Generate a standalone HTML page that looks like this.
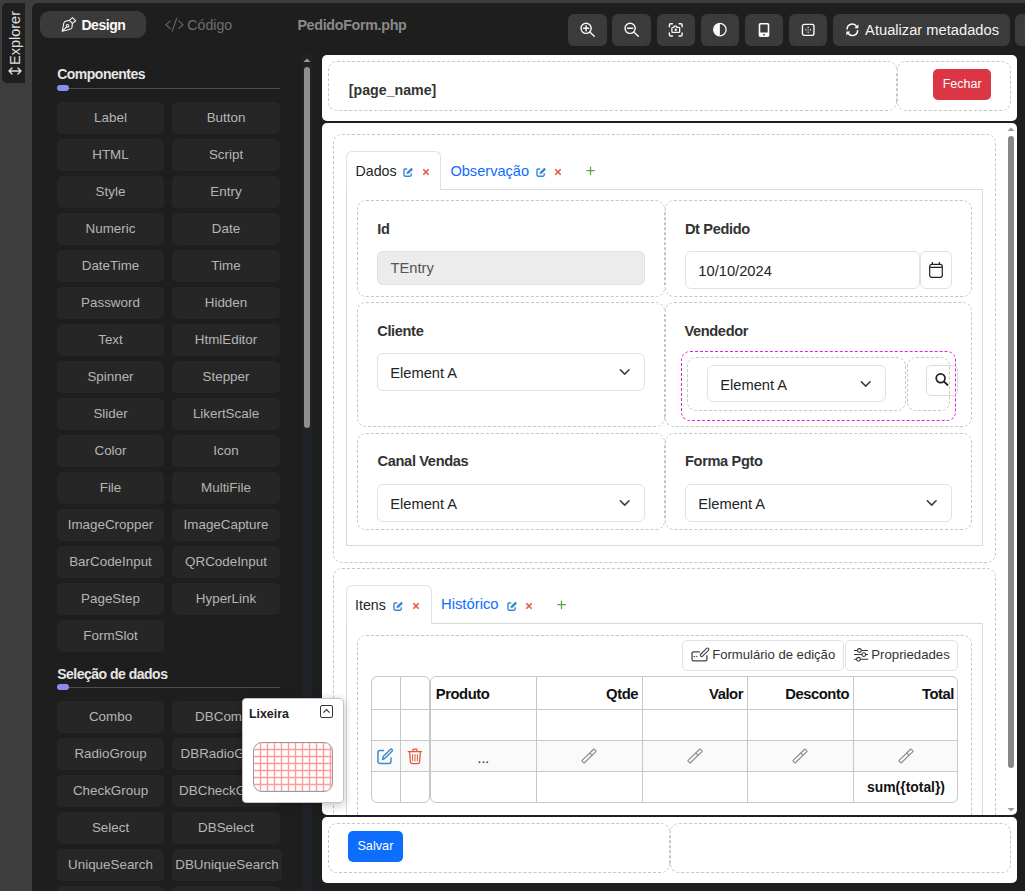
<!DOCTYPE html>
<html><head><meta charset="utf-8"><title>PedidoForm</title><style>
*{box-sizing:border-box;margin:0;padding:0}
html,body{width:1025px;height:891px;overflow:hidden;background:#3d3d3d;font-family:"Liberation Sans",sans-serif;position:relative}
.a{position:absolute}
.t{position:absolute;white-space:nowrap;line-height:1}
.dash{position:absolute;border:1px dashed #c6c6c6;border-radius:9px}
.card{position:absolute;background:#fff;border-radius:5px}
.tb{position:absolute;top:14px;height:32px;background:#3b3b3b;border-radius:6px}
.sb{position:absolute;height:32px;background:#262626;border-radius:5px;color:#b5b5b5;font-size:13.4px;text-align:center;white-space:nowrap;line-height:1;padding-top:9.8px}
.sh{position:absolute;left:57px;color:#e6e6e6;font-weight:bold;font-size:13.4px;white-space:nowrap;line-height:1}
.sl{position:absolute;left:57px;width:223px;height:1px;background:#505050}
.si{position:absolute;left:57px;width:12px;height:6px;border-radius:3px;background:#8c8cf5}
.lbl{position:absolute;font-weight:bold;font-size:14px;color:#333;white-space:nowrap;line-height:1}
.inp{position:absolute;border:1px solid #dee2e6;border-radius:6px;background:#fff;font-size:14.6px;color:#212529;white-space:nowrap}
.inp span{position:absolute;left:12px;top:50%;transform:translateY(-50%);line-height:1}
</style></head><body>
<div class="a" style="left:2px;top:3px;width:23px;height:80px;background:#1f1f1f;border-radius:5px 0 0 5px"></div>
<div class="t" style="left:14.8px;top:37.6px;transform:translate(-50%,-50%) rotate(-90deg);color:#e0e0e0;font-size:14.5px">Explorer</div>
<svg class="a" style="left:7px;top:66px" width="16" height="10" viewBox="0 0 16 10"><path d="M2 5H14M5 2L2 5L5 8M11 2L14 5L11 8" stroke="#ddd" stroke-width="1.4" fill="none" stroke-linecap="round" stroke-linejoin="round"/></svg>
<div class="a" style="left:32px;top:3px;width:1000px;height:900px;background:#1e1e1e;border-radius:6px 0 0 0"></div>
<div class="a" style="left:40px;top:11px;width:106px;height:27px;background:#3a3a3a;border-radius:9px"></div>
<svg class="a" style="left:56px;top:14px" width="24" height="22" viewBox="0 0 24 22"><g fill="none" stroke="#f2f2f2" stroke-width="1.1" stroke-linejoin="round"><path d="M16.5 3.7L19.75 6.8L16.4 9.4L13.4 6.4Z"/><path d="M13.4 6.4Q10 7 8.6 7.7Q7.6 8.4 7.2 12.3L6.2 17.3L8.1 16.8Q12 16 13.8 15.3Q15.8 14.5 16 13.5L16.4 9.4"/><circle cx="11.5" cy="11.8" r="1.3"/><path d="M10.6 12.8L6.4 17"/></g></svg>
<div class="t" style="left:81.40px;top:18.10px;font-size:14px;color:#fafafa;font-weight:bold;letter-spacing:-0.45px;">Design</div>
<svg class="a" style="left:165px;top:17px" width="19" height="16" viewBox="0 0 19 16"><path d="M5.5 3.6L1 7.7L5.5 11.8M13.4 3.6L18 7.7L13.4 11.8M11.8 0.9L7.1 14.5" stroke="#6a6a6a" stroke-width="1.05" fill="none"/></svg>
<div class="t" style="left:187.30px;top:17.93px;font-size:14.2px;color:#6e6e6e;">Código</div>
<div class="t" style="left:297.40px;top:18.04px;font-size:14.3px;color:#8a8a8a;font-weight:bold;letter-spacing:-0.32px;">PedidoForm.php</div>
<div class="tb" style="left:568px;width:39px"></div>
<div class="tb" style="left:612px;width:39px"></div>
<div class="tb" style="left:657px;width:38px"></div>
<div class="tb" style="left:701px;width:38px"></div>
<div class="tb" style="left:745px;width:38px"></div>
<div class="tb" style="left:789px;width:38px"></div>
<div class="tb" style="left:833px;width:177px"></div>
<div class="tb" style="left:1015px;width:40px"></div>
<svg class="a" style="left:579px;top:20px" width="18" height="18" viewBox="0 0 18 18"><g fill="none" stroke="#fafafa" stroke-width="1.4" stroke-linecap="round"><circle cx="7.1" cy="8.3" r="5.1"/><path d="M10.8 12L15.3 16.3M7.1 5.7V10.9M4.5 8.3H9.7"/></g></svg>
<svg class="a" style="left:623px;top:20px" width="18" height="18" viewBox="0 0 18 18"><g fill="none" stroke="#fafafa" stroke-width="1.4" stroke-linecap="round"><circle cx="7.1" cy="8.3" r="5.1"/><path d="M10.8 12L15.3 16.3M4.5 8.3H9.7"/></g></svg>
<svg class="a" style="left:667px;top:22px" width="18" height="16" viewBox="0 0 18 16"><g fill="none" stroke="#fafafa" stroke-width="1.4" stroke-linecap="round"><path d="M2.4 4.8V3Q2.4 1.7 3.7 1.7H5.4M12.1 1.7H13.8Q15.1 1.7 15.1 3V4.8M15.1 10.9V12.7Q15.1 14 13.8 14H12.1M5.4 14H3.7Q2.4 14 2.4 12.7V10.9"/></g><path d="M4.9 6.3Q4.9 5.4 5.8 5.4H6.7L7.3 4.2H9.3L9.9 5.4H11.8Q12.7 5.4 12.7 6.3V9.5Q12.7 10.4 11.8 10.4H5.8Q4.9 10.4 4.9 9.5Z" fill="none" stroke="#fafafa" stroke-width="1.3" stroke-linejoin="round"/><circle cx="8.8" cy="7.8" r="1.2" fill="#fafafa"/></svg>
<svg class="a" style="left:712px;top:22px" width="16" height="16" viewBox="0 0 16 16"><circle cx="7.9" cy="7.65" r="6.2" fill="none" stroke="#fafafa" stroke-width="1.3"/><path d="M7.9 1.45A6.2 6.2 0 0 0 7.9 13.85Z" fill="#fafafa"/></svg>
<svg class="a" style="left:758px;top:22px" width="12" height="16" viewBox="0 0 12 16"><rect x="0.7" y="0.9" width="10.6" height="14.1" rx="1.8" fill="#fafafa"/><rect x="2.3" y="2.6" width="7.4" height="8" rx=".3" fill="#3b3b3b"/><rect x="5.1" y="12.1" width="1.8" height="1.3" rx=".5" fill="#3b3b3b"/></svg>
<svg class="a" style="left:801px;top:23px" width="15" height="15" viewBox="0 0 15 15"><rect x="1.45" y="1.35" width="11.5" height="11" rx="1.8" fill="none" stroke="#fafafa" stroke-width="1.4"/><g fill="#fafafa"><path d="M7.2 3.7L8.3 4.9H6.1Z"/><path d="M7.2 10L8.3 8.8H6.1Z"/><path d="M4.2 6.85L5.4 5.8V7.9Z"/><path d="M10.2 6.85L9 5.8V7.9Z"/><rect x="6.7" y="6.35" width="1" height="1"/></g></svg>
<svg class="a" style="left:845px;top:23px" width="15" height="14" viewBox="0 0 15 14"><g fill="none" stroke="#fafafa" stroke-width="1.5" stroke-linecap="round"><path d="M2.1 6A5.1 5.1 0 0 1 11.6 3.6"/><path d="M12.6 7.6A5.1 5.1 0 0 1 3.1 10"/></g><path d="M13.4 1.2V5.2H9.4Z" fill="#fafafa"/><path d="M1.3 12.6V8.6H5.3Z" fill="#fafafa"/></svg>
<div class="t" style="left:865.10px;top:22.91px;font-size:14.7px;color:#f4f4f4;">Atualizar metadados</div>
<div class="t" style="left:57.20px;top:67.10px;font-size:14px;color:#e6e6e6;font-weight:bold;letter-spacing:-0.5px;">Componentes</div>
<div class="sl" style="top:88px"></div><div class="si" style="top:85px"></div>
<div class="sb" style="left:57px;top:101.6px;width:107px">Label</div>
<div class="sb" style="left:172px;top:101.6px;width:108px">Button</div>
<div class="sb" style="left:57px;top:138.6px;width:107px">HTML</div>
<div class="sb" style="left:172px;top:138.6px;width:108px">Script</div>
<div class="sb" style="left:57px;top:175.6px;width:107px">Style</div>
<div class="sb" style="left:172px;top:175.6px;width:108px">Entry</div>
<div class="sb" style="left:57px;top:212.6px;width:107px">Numeric</div>
<div class="sb" style="left:172px;top:212.6px;width:108px">Date</div>
<div class="sb" style="left:57px;top:249.6px;width:107px">DateTime</div>
<div class="sb" style="left:172px;top:249.6px;width:108px">Time</div>
<div class="sb" style="left:57px;top:286.6px;width:107px">Password</div>
<div class="sb" style="left:172px;top:286.6px;width:108px">Hidden</div>
<div class="sb" style="left:57px;top:323.6px;width:107px">Text</div>
<div class="sb" style="left:172px;top:323.6px;width:108px">HtmlEditor</div>
<div class="sb" style="left:57px;top:360.6px;width:107px">Spinner</div>
<div class="sb" style="left:172px;top:360.6px;width:108px">Stepper</div>
<div class="sb" style="left:57px;top:397.6px;width:107px">Slider</div>
<div class="sb" style="left:172px;top:397.6px;width:108px">LikertScale</div>
<div class="sb" style="left:57px;top:434.6px;width:107px">Color</div>
<div class="sb" style="left:172px;top:434.6px;width:108px">Icon</div>
<div class="sb" style="left:57px;top:471.6px;width:107px">File</div>
<div class="sb" style="left:172px;top:471.6px;width:108px">MultiFile</div>
<div class="sb" style="left:57px;top:508.6px;width:107px">ImageCropper</div>
<div class="sb" style="left:172px;top:508.6px;width:108px">ImageCapture</div>
<div class="sb" style="left:57px;top:545.6px;width:107px">BarCodeInput</div>
<div class="sb" style="left:172px;top:545.6px;width:108px">QRCodeInput</div>
<div class="sb" style="left:57px;top:582.6px;width:107px">PageStep</div>
<div class="sb" style="left:172px;top:582.6px;width:108px">HyperLink</div>
<div class="sb" style="left:57px;top:619.6px;width:107px">FormSlot</div>
<div class="t" style="left:57.20px;top:666.60px;font-size:14px;color:#e6e6e6;font-weight:bold;letter-spacing:-0.5px;">Seleção de dados</div>
<div class="sl" style="top:687px"></div><div class="si" style="top:684px"></div>
<div class="sb" style="left:57px;top:700.6px;width:107px">Combo</div>
<div class="sb" style="left:172px;top:700.6px;width:108px">DBCombo</div>
<div class="sb" style="left:57px;top:737.6px;width:107px">RadioGroup</div>
<div class="sb" style="left:172px;top:737.6px;width:108px">DBRadioGroup</div>
<div class="sb" style="left:57px;top:774.6px;width:107px">CheckGroup</div>
<div class="sb" style="left:172px;top:774.6px;width:108px">DBCheckGroup</div>
<div class="sb" style="left:57px;top:811.6px;width:107px">Select</div>
<div class="sb" style="left:172px;top:811.6px;width:108px">DBSelect</div>
<div class="sb" style="left:57px;top:848.6px;width:107px">UniqueSearch</div>
<div class="sb" style="left:172px;top:848.6px;width:110px">DBUniqueSearch</div>
<div class="sb" style="left:57px;top:885.6px;width:107px">MultiSearch</div>
<div class="sb" style="left:172px;top:885.6px;width:108px">DBMultiSearch</div>
<div class="a" style="left:302px;top:55px;width:10px;height:840px;background:#1f2328"></div>
<svg class="a" style="left:302px;top:57px" width="10" height="6" viewBox="0 0 10 6"><path d="M1.5 5L5 1.5L8.5 5Z" fill="#9a9a9a"/></svg>
<div class="a" style="left:304px;top:67px;width:6px;height:361px;background:#8f8f8f;border-radius:3px"></div>
<div class="card" style="left:322px;top:55px;width:695px;height:66px"></div>
<div class="dash" style="left:328px;top:61px;width:569px;height:50px"></div>
<div class="dash" style="left:897px;top:61px;width:114px;height:50px"></div>
<div class="a" style="left:896px;top:71px;width:1px;height:30px;overflow:hidden;background:#fff"><div class="dash" style="left:0;top:-10px;width:114px;height:50px"></div></div>
<div class="t" style="left:348.80px;top:82.63px;font-size:14.2px;color:#333;font-weight:bold;">[page_name]</div>
<div class="a" style="left:933px;top:69px;width:58px;height:31px;background:#dc3545;border-radius:5px"></div>
<div class="t" style="left:942.70px;top:78.28px;font-size:12.5px;color:#fff;">Fechar</div>
<div class="card" style="left:322px;top:123px;width:695px;height:692px;overflow:hidden">
<div class="dash" style="left:11px;top:11px;width:663px;height:429px;"></div>
<div class="a" style="left:24px;top:66px;width:637px;height:357px;border:1px solid #dadada;border-top:none"></div>
<div class="a" style="left:118px;top:66px;width:543px;height:1px;background:#dadada"></div>
<div class="a" style="left:24px;top:28px;width:95px;height:39px;border:1px solid #dee2e6;border-bottom:none;border-radius:6px 6px 0 0;background:#fff"></div>
<div class="t" style="left:33.60px;top:40.93px;font-size:14.2px;color:#212529;">Dados</div>
<svg class="a" style="left:81px;top:44.099999999999994px;" width="12" height="11" viewBox="0 0 12 11"><path d="M4.2 2H2.1Q1 2 1 3.1V8.1Q1 9.2 2.1 9.2H7.1Q8.2 9.2 8.2 8.1V6.2" fill="none" stroke="#3a87cf" stroke-width="1.4"/><path d="M3.5 7L3.9 5.1L8.3 0.7L10 2.4L5.6 6.8Z" fill="#3a87cf"/></svg>
<svg class="a" style="left:99.5px;top:45px;" width="8" height="8" viewBox="0 0 8 8"><path d="M1.3 1.3L6.7 6.7M6.7 1.3L1.3 6.7" stroke="#e0533c" stroke-width="1.5"/></svg>
<div class="t" style="left:128.40px;top:40.59px;font-size:14.6px;color:#0d6efd;">Observação</div>
<svg class="a" style="left:214px;top:44.099999999999994px;" width="12" height="11" viewBox="0 0 12 11"><path d="M4.2 2H2.1Q1 2 1 3.1V8.1Q1 9.2 2.1 9.2H7.1Q8.2 9.2 8.2 8.1V6.2" fill="none" stroke="#3a87cf" stroke-width="1.4"/><path d="M3.5 7L3.9 5.1L8.3 0.7L10 2.4L5.6 6.8Z" fill="#3a87cf"/></svg>
<svg class="a" style="left:231.5px;top:45px;" width="8" height="8" viewBox="0 0 8 8"><path d="M1.3 1.3L6.7 6.7M6.7 1.3L1.3 6.7" stroke="#e0533c" stroke-width="1.5"/></svg>
<svg class="a" style="left:263.5px;top:43px;" width="9" height="10" viewBox="0 0 9 10"><path d="M4.5 1.2V8.6M0.9 4.7H8.4" stroke="#5aa83c" stroke-width="1.3" stroke-linecap="round"/></svg>
<div class="dash" style="left:35px;top:77px;width:308px;height:97px;"></div>
<div class="dash" style="left:343px;top:77px;width:307px;height:97px;"></div>
<div class="dash" style="left:35px;top:179px;width:308px;height:125px;"></div>
<div class="dash" style="left:343px;top:179px;width:307px;height:125px;"></div>
<div class="dash" style="left:35px;top:310px;width:308px;height:97px;"></div>
<div class="dash" style="left:343px;top:310px;width:307px;height:97px;"></div>
<div class="a" style="left:342px;top:87px;width:1px;height:77px;overflow:hidden;background:#fff"><div class="dash" style="left:0;top:-10px;width:307px;height:97px"></div></div>
<div class="a" style="left:342px;top:189px;width:1px;height:105px;overflow:hidden;background:#fff"><div class="dash" style="left:0;top:-10px;width:307px;height:125px"></div></div>
<div class="a" style="left:342px;top:320px;width:1px;height:77px;overflow:hidden;background:#fff"><div class="dash" style="left:0;top:-10px;width:307px;height:97px"></div></div>
<div class="t" style="left:55.30px;top:98.89px;font-size:14.6px;color:#333;font-weight:bold;letter-spacing:-0.35px;">Id</div>
<div class="inp" style="left:55px;top:128px;width:268px;height:34px;background:#ececec;border-color:#dfe1e4"></div>
<div class="t" style="left:68.50px;top:138.40px;font-size:14.7px;color:#555;">TEntry</div>
<div class="t" style="left:362.90px;top:98.89px;font-size:14.6px;color:#333;font-weight:bold;letter-spacing:-0.35px;">Dt Pedido</div>
<div class="inp" style="left:363px;top:128px;width:235px;height:38px;"></div>
<div class="t" style="left:376.30px;top:140.61px;font-size:14.7px;color:#212529;">10/10/2024</div>
<div class="inp" style="left:598px;top:128px;width:32px;height:38px;"></div>
<svg class="a" style="left:606px;top:138px;" width="16" height="18" viewBox="0 0 16 18"><rect x="1.7" y="3.4" width="12.6" height="12.9" rx="2" fill="none" stroke="#222" stroke-width="1.2"/><path d="M1.7 6.3H14.3M4.4 1.1V4M11.4 1.1V4" stroke="#222" stroke-width="1.2"/></svg>
<div class="t" style="left:55.20px;top:200.69px;font-size:14.6px;color:#333;font-weight:bold;letter-spacing:-0.35px;">Cliente</div>
<div class="inp" style="left:55px;top:230px;width:268px;height:38px;"></div>
<div class="t" style="left:68.20px;top:243.00px;font-size:14.7px;color:#212529;">Element A</div>
<svg class="a" style="left:297px;top:245px;" width="12" height="8" viewBox="0 0 12 8"><path d="M1.3 1.7L5.7 6.1L10.1 1.7" fill="none" stroke="#343a40" stroke-width="1.5" stroke-linecap="round" stroke-linejoin="round"/></svg>
<div class="t" style="left:362.40px;top:200.69px;font-size:14.6px;color:#333;font-weight:bold;letter-spacing:-0.35px;">Vendedor</div>
<div class="a" style="left:359px;top:228px;width:275px;height:70px;border:1px dashed #e020e0;border-radius:9px"></div>
<div class="dash" style="left:365px;top:234px;width:219px;height:54px;"></div>
<div class="dash" style="left:585px;top:234px;width:43px;height:54px;"></div>
<div class="inp" style="left:385px;top:242px;width:179px;height:37px;"></div>
<div class="t" style="left:398.20px;top:255.00px;font-size:14.7px;color:#212529;">Element A</div>
<svg class="a" style="left:538px;top:257px;" width="12" height="8" viewBox="0 0 12 8"><path d="M1.3 1.7L5.7 6.1L10.1 1.7" fill="none" stroke="#343a40" stroke-width="1.5" stroke-linecap="round" stroke-linejoin="round"/></svg>
<div class="a" style="left:604px;top:242px;width:32px;height:31px;border:1px solid #dcdcdc;border-radius:5px"></div>
<div class="a" style="left:604px;top:242px;width:24px;height:31px;overflow:hidden"><svg class="a" style="left:8px;top:7px" width="17" height="16" viewBox="0 0 17 16"><circle cx="6.6" cy="6.2" r="4.4" fill="none" stroke="#222" stroke-width="1.7"/><path d="M9.9 9.5L13.6 13" stroke="#222" stroke-width="1.8" stroke-linecap="round"/></svg></div>
<div class="t" style="left:55.60px;top:330.89px;font-size:14.6px;color:#333;font-weight:bold;letter-spacing:-0.35px;">Canal Vendas</div>
<div class="inp" style="left:55px;top:361px;width:268px;height:38px;"></div>
<div class="t" style="left:68.20px;top:374.00px;font-size:14.7px;color:#212529;">Element A</div>
<svg class="a" style="left:297px;top:376px;" width="12" height="8" viewBox="0 0 12 8"><path d="M1.3 1.7L5.7 6.1L10.1 1.7" fill="none" stroke="#343a40" stroke-width="1.5" stroke-linecap="round" stroke-linejoin="round"/></svg>
<div class="t" style="left:363.00px;top:330.89px;font-size:14.6px;color:#333;font-weight:bold;letter-spacing:-0.35px;">Forma Pgto</div>
<div class="inp" style="left:363px;top:361px;width:267px;height:38px;"></div>
<div class="t" style="left:376.20px;top:374.00px;font-size:14.7px;color:#212529;">Element A</div>
<svg class="a" style="left:604px;top:376px;" width="12" height="8" viewBox="0 0 12 8"><path d="M1.3 1.7L5.7 6.1L10.1 1.7" fill="none" stroke="#343a40" stroke-width="1.5" stroke-linecap="round" stroke-linejoin="round"/></svg>
<div class="dash" style="left:11px;top:445px;width:663px;height:400px;"></div>
<div class="a" style="left:24px;top:500px;width:637px;height:400px;border:1px solid #dadada;border-top:none"></div>
<div class="a" style="left:109px;top:500px;width:552px;height:1px;background:#dadada"></div>
<div class="a" style="left:24px;top:462px;width:86px;height:39px;border:1px solid #dee2e6;border-bottom:none;border-radius:6px 6px 0 0;background:#fff"></div>
<div class="t" style="left:33.00px;top:474.53px;font-size:14.2px;color:#212529;">Itens</div>
<svg class="a" style="left:71px;top:478.1px;" width="12" height="11" viewBox="0 0 12 11"><path d="M4.2 2H2.1Q1 2 1 3.1V8.1Q1 9.2 2.1 9.2H7.1Q8.2 9.2 8.2 8.1V6.2" fill="none" stroke="#3a87cf" stroke-width="1.4"/><path d="M3.5 7L3.9 5.1L8.3 0.7L10 2.4L5.6 6.8Z" fill="#3a87cf"/></svg>
<svg class="a" style="left:89.5px;top:479px;" width="8" height="8" viewBox="0 0 8 8"><path d="M1.3 1.3L6.7 6.7M6.7 1.3L1.3 6.7" stroke="#e0533c" stroke-width="1.5"/></svg>
<div class="t" style="left:119.00px;top:474.02px;font-size:14.8px;color:#0d6efd;">Histórico</div>
<svg class="a" style="left:185px;top:478.1px;" width="12" height="11" viewBox="0 0 12 11"><path d="M4.2 2H2.1Q1 2 1 3.1V8.1Q1 9.2 2.1 9.2H7.1Q8.2 9.2 8.2 8.1V6.2" fill="none" stroke="#3a87cf" stroke-width="1.4"/><path d="M3.5 7L3.9 5.1L8.3 0.7L10 2.4L5.6 6.8Z" fill="#3a87cf"/></svg>
<svg class="a" style="left:203px;top:479px;" width="8" height="8" viewBox="0 0 8 8"><path d="M1.3 1.3L6.7 6.7M6.7 1.3L1.3 6.7" stroke="#e0533c" stroke-width="1.5"/></svg>
<svg class="a" style="left:234.5px;top:477px;" width="9" height="10" viewBox="0 0 9 10"><path d="M4.5 1.2V8.6M0.9 4.7H8.4" stroke="#5aa83c" stroke-width="1.3" stroke-linecap="round"/></svg>
<div class="dash" style="left:35px;top:512px;width:615px;height:400px;"></div>
<div class="a" style="left:360px;top:517px;width:162px;height:31px;border:1px solid #dee2e6;border-radius:5px"></div>
<svg class="a" style="left:368px;top:524px;" width="20" height="17" viewBox="0 0 20 17"><path d="M9.8 4.85H3.6Q2.05 4.85 2.05 6.4V12.3Q2.05 13.85 3.6 13.85H15.4Q16.95 13.85 16.95 12.3V8.3" fill="none" stroke="#444" stroke-width="1.3"/><g transform="translate(14.6 5.3) rotate(-45)"><rect x="-5.4" y="-1.35" width="10.8" height="2.7" rx="1.3" fill="#fff" stroke="#444" stroke-width="1.1"/></g><path d="M3.6 9.5H5.1" stroke="#444" stroke-width="1.1"/><circle cx="6.8" cy="9.5" r=".65" fill="#444"/></svg>
<div class="t" style="left:390.20px;top:525.07px;font-size:13.1px;color:#333;">Formulário de edição</div>
<div class="a" style="left:523px;top:517px;width:113px;height:31px;border:1px solid #dee2e6;border-radius:5px"></div>
<svg class="a" style="left:531px;top:525px;" width="16" height="15" viewBox="0 0 16 15"><g stroke="#333" stroke-width="1.1" fill="#fff"><path d="M1.1 2.5H15M1.1 6.5H15M1.1 11.3H15"/><circle cx="6.4" cy="2.5" r="1.9"/><circle cx="10.8" cy="6.6" r="1.9"/><circle cx="5.5" cy="11.3" r="1.9"/></g></svg>
<div class="t" style="left:549.30px;top:524.98px;font-size:13.2px;color:#333;">Propriedades</div>
<div class="a" style="left:49px;top:553px;width:59px;height:127px;border:1px solid #c8c8c8;border-radius:6px;overflow:hidden"></div>
<div class="a" style="left:108px;top:553px;width:528px;height:127px;border:1px solid #c8c8c8;border-radius:6px;overflow:hidden"></div>
<div class="a" style="left:50px;top:618px;width:57px;height:30px;background:#fafafa"></div>
<div class="a" style="left:109px;top:618px;width:526px;height:30px;background:#fafafa"></div>
<div class="a" style="left:49px;top:586px;width:59px;height:1px;background:#c8c8c8"></div>
<div class="a" style="left:108px;top:586px;width:528px;height:1px;background:#c8c8c8"></div>
<div class="a" style="left:49px;top:617px;width:59px;height:1px;background:#c8c8c8"></div>
<div class="a" style="left:108px;top:617px;width:528px;height:1px;background:#c8c8c8"></div>
<div class="a" style="left:49px;top:648px;width:59px;height:1px;background:#c8c8c8"></div>
<div class="a" style="left:108px;top:648px;width:528px;height:1px;background:#c8c8c8"></div>
<div class="a" style="left:78px;top:553px;width:1px;height:127px;background:#c8c8c8"></div>
<div class="a" style="left:214px;top:553px;width:1px;height:127px;background:#c8c8c8"></div>
<div class="a" style="left:320px;top:553px;width:1px;height:127px;background:#c8c8c8"></div>
<div class="a" style="left:425px;top:553px;width:1px;height:127px;background:#c8c8c8"></div>
<div class="a" style="left:531px;top:553px;width:1px;height:127px;background:#c8c8c8"></div>
<div class="t" style="left:113.80px;top:563.72px;font-size:14.8px;color:#111;font-weight:bold;letter-spacing:-0.45px;">Produto</div>
<div class="t" style="left:210.00px;top:563.72px;font-size:14.8px;color:#111;font-weight:bold;width:106px;text-align:right;letter-spacing:-0.45px;">Qtde</div>
<div class="t" style="left:315.00px;top:563.72px;font-size:14.8px;color:#111;font-weight:bold;width:106px;text-align:right;letter-spacing:-0.45px;">Valor</div>
<div class="t" style="left:421.00px;top:563.72px;font-size:14.8px;color:#111;font-weight:bold;width:106px;text-align:right;letter-spacing:-0.45px;">Desconto</div>
<div class="t" style="left:526.00px;top:563.72px;font-size:14.8px;color:#111;font-weight:bold;width:106px;text-align:right;letter-spacing:-0.45px;">Total</div>
<div class="t" style="left:523.00px;top:657.88px;font-size:13.9px;color:#111;font-weight:bold;width:100px;text-align:right;">sum({total})</div>
<div class="t" style="left:155.50px;top:627.60px;font-size:14px;color:#222;">...</div>
<svg class="a" style="left:55px;top:625px;" width="17" height="17" viewBox="0 0 17 17"><path d="M6.5 2.5H3Q1 2.5 1 4.5V13.5Q1 15.5 3 15.5H12Q14 15.5 14 13.5V10" fill="none" stroke="#3b8ad0" stroke-width="1.5" stroke-linecap="round"/><path d="M5.5 11.5L6.2 8.6L13.3 1.5Q14.2 0.7 15 1.5Q15.8 2.3 15 3.2L7.9 10.3Z" fill="none" stroke="#3b8ad0" stroke-width="1.4" stroke-linejoin="round"/></svg>
<svg class="a" style="left:85px;top:625px;" width="16" height="17" viewBox="0 0 16 17"><g fill="none" stroke="#e05a40" stroke-width="1.3" stroke-linecap="round" stroke-linejoin="round"><path d="M1.2 3.6H14.6"/><path d="M5.8 3.4L6.3 1.2H9.7L10.2 3.4"/><path d="M2.6 4L3.4 14Q3.6 15.6 5.2 15.6H10.8Q12.4 15.6 12.6 14L13.4 4"/></g><path d="M5.6 6.6V12.9M8 6.6V12.9M10.4 6.6V12.9" stroke="#e05a40" stroke-width="1" stroke-linecap="round"/></svg>
<svg class="a" style="left:255.20000000000005px;top:622.8px;" width="24" height="20" viewBox="-12 -10 24 20"><g transform="rotate(-44)"><rect x="-8.6" y="-1.65" width="17.2" height="3.3" rx="0.6" fill="none" stroke="#8a8a8a" stroke-width="1.1"/><path d="M2.6 -1.65V1.65" stroke="#8a8a8a" stroke-width="1.1"/></g></svg>
<svg class="a" style="left:360.79999999999995px;top:622.8px;" width="24" height="20" viewBox="-12 -10 24 20"><g transform="rotate(-44)"><rect x="-8.6" y="-1.65" width="17.2" height="3.3" rx="0.6" fill="none" stroke="#8a8a8a" stroke-width="1.1"/><path d="M2.6 -1.65V1.65" stroke="#8a8a8a" stroke-width="1.1"/></g></svg>
<svg class="a" style="left:466.4px;top:622.8px;" width="24" height="20" viewBox="-12 -10 24 20"><g transform="rotate(-44)"><rect x="-8.6" y="-1.65" width="17.2" height="3.3" rx="0.6" fill="none" stroke="#8a8a8a" stroke-width="1.1"/><path d="M2.6 -1.65V1.65" stroke="#8a8a8a" stroke-width="1.1"/></g></svg>
<svg class="a" style="left:572.1px;top:622.8px;" width="24" height="20" viewBox="-12 -10 24 20"><g transform="rotate(-44)"><rect x="-8.6" y="-1.65" width="17.2" height="3.3" rx="0.6" fill="none" stroke="#8a8a8a" stroke-width="1.1"/><path d="M2.6 -1.65V1.65" stroke="#8a8a8a" stroke-width="1.1"/></g></svg>
<svg class="a" style="left:684px;top:3px;" width="10" height="6" viewBox="0 0 10 6"><path d="M1.5 5L5 1.5L8.5 5Z" fill="#9a9a9a"/></svg>
<div class="a" style="left:686px;top:13px;width:6px;height:632px;background:#868686;border-radius:3px"></div>
<svg class="a" style="left:684px;top:684px;" width="10" height="6" viewBox="0 0 10 6"><path d="M1.5 1L5 4.5L8.5 1Z" fill="#9a9a9a"/></svg>
</div>
<div class="card" style="left:322px;top:817px;width:695px;height:66px"></div>
<div class="dash" style="left:328px;top:823px;width:342px;height:50px"></div>
<div class="dash" style="left:670px;top:823px;width:341px;height:50px"></div>
<div class="a" style="left:669px;top:833px;width:1px;height:30px;overflow:hidden;background:#fff"><div class="dash" style="left:0;top:-10px;width:341px;height:50px"></div></div>
<div class="a" style="left:348px;top:831px;width:55px;height:31px;background:#0d6efd;border-radius:5px"></div>
<div class="t" style="left:357.40px;top:840.00px;font-size:12.7px;color:#fff;">Salvar</div>
<div class="a" style="left:242px;top:698px;width:102px;height:105px;background:#fff;border:1px solid #c4c4c4;border-radius:4px;box-shadow:0 2px 8px rgba(0,0,0,.25)"></div>
<div class="t" style="left:248.90px;top:707.76px;font-size:12.4px;color:#222;font-weight:bold;">Lixeira</div>
<div class="a" style="left:320px;top:705px;width:13px;height:13px;border:1.3px solid #333;border-radius:2px"></div>
<svg class="a" style="left:320px;top:705px" width="13" height="13" viewBox="0 0 13 13"><path d="M3.5 7.6L6.5 4.6L9.5 7.6" fill="none" stroke="#333" stroke-width="1.2"/></svg>
<div class="a" style="left:253px;top:742px;width:80px;height:50px;border:1px solid #9a9a9a;border-radius:9px;overflow:hidden;background:#fff"><svg class="a" style="left:-1px;top:-1px" width="80" height="50"><g stroke="#ff9b9b" stroke-width="1.4"><path d="M7.5 0V50" /><path d="M14.5 0V50" /><path d="M21.5 0V50" /><path d="M28.5 0V50" /><path d="M35.5 0V50" /><path d="M42.5 0V50" /><path d="M49.5 0V50" /><path d="M56.5 0V50" /><path d="M63.5 0V50" /><path d="M70.5 0V50" /><path d="M77.5 0V50" /><path d="M0 0.5H80" /><path d="M0 7.5H80" /><path d="M0 14.5H80" /><path d="M0 21.5H80" /><path d="M0 28.5H80" /><path d="M0 35.5H80" /><path d="M0 42.5H80" /><path d="M0 49.5H80" /></g></svg></div>
</body></html>
